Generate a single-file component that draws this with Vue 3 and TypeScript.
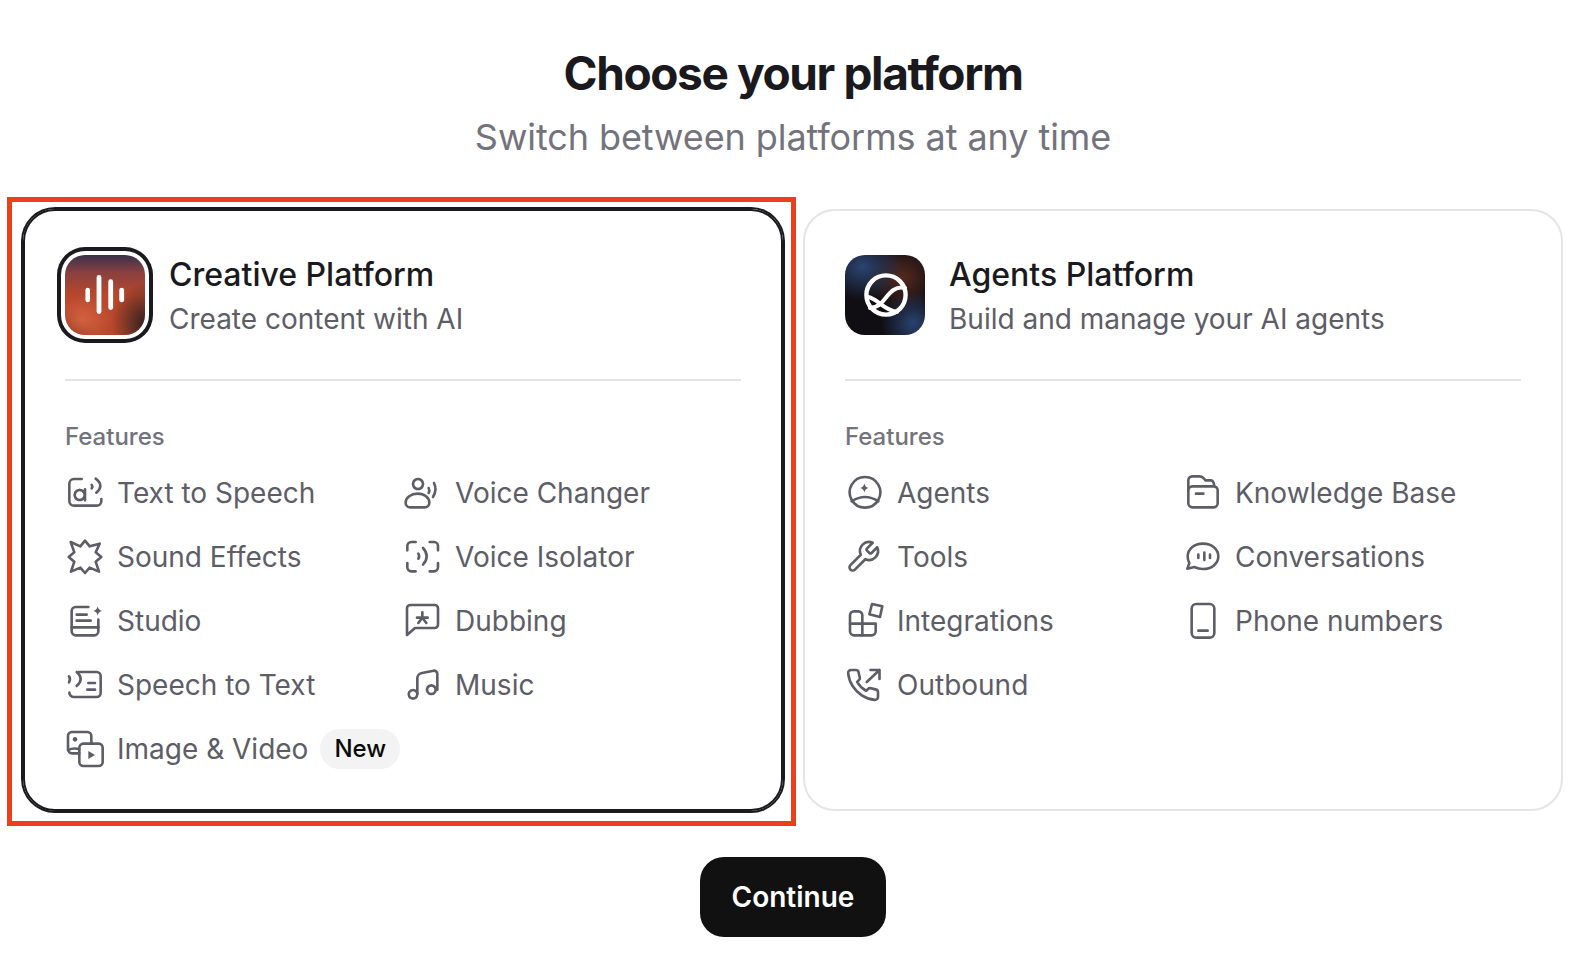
<script setup lang="ts">
type Icon = { vb?: string; sw?: number; s: string[]; f?: string[] }
type Feature = { label: string; icon: string; badge?: string }

const icons: Record<string, Icon> = {
  tts: {
    vb: '-3 0 108 108',
    s: [
      'M47 12H24a14 14 0 0 0-14 14V78a14 14 0 0 0 14 14H92a14 14 0 0 0 14-14V72',
      'M41 45a15 15 0 1 0 .01 0M57 43V76',
      'M89 11q14 10 14 21t-12 21M77 30q4 5 0 10',
    ],
  },
  sfx: {
    vb: '-3 0 108 108',
    s: ['M14 9L43 22L57 5L71 22L101 14L89 40L106 54L89 68L99 98L71 86L57 102L43 86L15 98L25 68L8 54L25 40Z'],
  },
  studio: {
    vb: '-3 0 108 108',
    s: ['M67 12H29a12 12 0 0 0-12 12V85a12 12 0 0 0 12 12H85a12 12 0 0 0 12-12V50', 'M17 73H97', 'M32 35H62M32 53H74'],
    f: ['M95 10q2 11 13 14q-11 2-13 14q-2-12-13-14q11-3 13-14z'],
  },
  stt: {
    vb: '-3 0 108 108',
    s: [
      'M38 15H92a12 12 0 0 1 12 12V78a12 12 0 0 1-12 12H24a14 14 0 0 1-14-13',
      'M67 48H87M64 68H87',
      'M32 15q12 10 12 21t-12 21M9 28q6 9 0 18',
    ],
  },
  image: {
    vb: '-3 0 108 108',
    s: [
      'M76 36V15a12 12 0 0 0-12-12H18a12 12 0 0 0-12 12V55a12 12 0 0 0 12 12H40',
      'M6 57q18-8 34-2',
      'M52 38H98a12 12 0 0 1 12 12V93a12 12 0 0 1-12 12H52a12 12 0 0 1-12-12V50a12 12 0 0 1 12-12z',
    ],
    f: ['M67 60L87 72L67 84Z', 'M27 18a7 7 0 1 0 .01 0z'],
  },
  changer: {
    s: [
      'M45 12a15 15 0 1 0 .01 0z',
      'M44 56c-20 0-36 12-36 27c0 8 6 14 14 14H64c9 0 15-6 15-14c0-15-15-27-35-27z',
      'M93 24q10 20-3 42M77 39q4 8 0 15',
    ],
  },
  isolator: {
    s: [
      'M38 9H25a12 12 0 0 0-12 12V34M80 9H93a12 12 0 0 1 12 12V34',
      'M13 72V85a12 12 0 0 0 12 12H38M105 72V85a12 12 0 0 1-12 12H80',
      'M60 27q11 11 11 25t-11 25M46 44q5 8 0 15',
    ],
  },
  dubbing: {
    s: [
      'M22 6H95a10 10 0 0 1 10 10V65a10 10 0 0 1-10 10H36L12 96V16a10 10 0 0 1 10-10z',
      'M58 28V40M42 44H74M58 44L46 60M58 44L70 60',
    ],
  },
  music: {
    s: [
      'M30 69a13 13 0 1 0 .01 0z',
      'M85 55a13 13 0 1 0 .01 0z',
      'M43 80V34a16 16 0 0 1 14-16L92 11a10 10 0 0 1 11 10V68',
    ],
  },
  agents: {
    s: ['M60 6a46 46 0 1 0 .01 0z', 'M20 79q40-26 80 0'],
    f: ['M58 25q2 12 13 14q-11 2-13 14q-2-12-13-14q11-2 13-14z'],
  },
  tools: {
    vb: '0 0 24 24',
    sw: 1.75,
    s: ['M14.7 6.3a1 1 0 0 0 0 1.4l1.6 1.6a1 1 0 0 0 1.4 0l3.77-3.77a6 6 0 0 1-7.94 7.94l-6.91 6.91a2.12 2.12 0 0 1-3-3l6.91-6.91a6 6 0 0 1 7.94-7.94l-3.76 3.76z'],
  },
  integrations: {
    s: [
      'M52 62V37a12 12 0 0 0-12-12H27a12 12 0 0 0-12 12V85a12 12 0 0 0 12 12H80a12 12 0 0 0 12-12V62z',
      'M15 62H52M52 62V97',
      'M81 3L112 10L105 42L73 34Z',
    ],
  },
  outbound: {
    vb: '0 0 24 24',
    sw: 1.75,
    s: [
      'M22 16.92v3a2 2 0 0 1-2.18 2 19.79 19.79 0 0 1-8.63-3.07 19.5 19.5 0 0 1-6-6 19.79 19.79 0 0 1-3.07-8.67A2 2 0 0 1 4.11 2h3a2 2 0 0 1 2 1.72 12.84 12.84 0 0 0 .7 2.81 2 2 0 0 1-.45 2.11L8.09 9.91a16 16 0 0 0 6 6l1.27-1.27a2 2 0 0 1 2.11-.45 12.84 12.84 0 0 0 2.81.7A2 2 0 0 1 22 16.92z',
      'M14.5 10L23 2M17 2h6v6',
    ],
  },
  knowledge: {
    s: [
      'M28 34H92a12 12 0 0 1 12 12V85a12 12 0 0 1-12 12H28a12 12 0 0 1-12-12V46a12 12 0 0 1 12-12z',
      'M16 44V16a12 12 0 0 1 12-12H50q8 0 14 8l3 4H84q8 0 10 18',
      'M39 56H61',
    ],
  },
  conversations: {
    s: [
      'M60 14c26 0 46 16 46 38s-20 38-46 38c-9 0-18-2-26-6l-21 5l6-17c-4-6-5-13-5-20c0-22 20-38 46-38z',
      'M46 47V57M64 41V63M81 47V57',
    ],
  },
  phone: {
    s: [
      'M40 3H80a14 14 0 0 1 14 14V90a14 14 0 0 1-14 14H40a14 14 0 0 1-14-14V17a14 14 0 0 1 14-14z',
      'M46 83H74',
    ],
  },
}

const creative: Feature[] = [
  { label: 'Text to Speech', icon: 'tts' },
  { label: 'Voice Changer', icon: 'changer' },
  { label: 'Sound Effects', icon: 'sfx' },
  { label: 'Voice Isolator', icon: 'isolator' },
  { label: 'Studio', icon: 'studio' },
  { label: 'Dubbing', icon: 'dubbing' },
  { label: 'Speech to Text', icon: 'stt' },
  { label: 'Music', icon: 'music' },
  { label: 'Image & Video', icon: 'image', badge: 'New' },
]

const agents: Feature[] = [
  { label: 'Agents', icon: 'agents' },
  { label: 'Knowledge Base', icon: 'knowledge' },
  { label: 'Tools', icon: 'tools' },
  { label: 'Conversations', icon: 'conversations' },
  { label: 'Integrations', icon: 'integrations' },
  { label: 'Phone numbers', icon: 'phone' },
  { label: 'Outbound', icon: 'outbound' },
]

const platforms = [
  { id: 'creative', title: 'Creative Platform', sub: 'Create content with AI', features: creative, selected: true },
  { id: 'agents', title: 'Agents Platform', sub: 'Build and manage your AI agents', features: agents, selected: false },
]
</script>

<template>
  <div class="page">
    <h1 class="heading">Choose your platform</h1>
    <p class="subheading">Switch between platforms at any time</p>

    <div class="cards">
      <section
        v-for="p in platforms"
        :key="p.id"
        class="card"
        :class="{ selected: p.selected }"
      >
        <div v-if="p.selected" class="highlight"></div>
        <header class="card-head">
          <div class="logo" :class="p.id">
            <svg v-if="p.id === 'creative'" viewBox="0 0 80 80" width="80" height="80" fill="#fff">
              <rect x="20.4" y="32.7" width="4.6" height="14.6" rx="2.3" />
              <rect x="31.6" y="20" width="4.8" height="39" rx="2.4" />
              <rect x="43.3" y="24.3" width="4.8" height="30.7" rx="2.4" />
              <rect x="54.3" y="32.7" width="4.8" height="14.6" rx="2.4" />
            </svg>
            <svg v-else viewBox="0 0 80 80" width="80" height="80" fill="none" stroke="#fff" stroke-linecap="round">
              <circle cx="41" cy="40" r="19.6" stroke-width="4.4" />
              <path d="M23 42C32 43 38 55 52 57" stroke-width="4" />
              <path d="M60 33C46 30 42 44 34 50C31 52 28 53 25 53" stroke-width="4" />
            </svg>
          </div>
          <div class="card-titles">
            <div class="card-title">{{ p.title }}</div>
            <div class="card-sub">{{ p.sub }}</div>
          </div>
        </header>

        <div class="divider"></div>

        <div class="features-label">Features</div>
        <ul class="features">
          <li v-for="f in p.features" :key="f.label" class="feature">
            <svg
              class="feature-icon"
              :viewBox="icons[f.icon].vb || '0 0 108 108'"
              width="36"
              height="36"
              fill="none"
              stroke="currentColor"
              stroke-linecap="round"
              stroke-linejoin="round"
              :stroke-width="icons[f.icon].sw || 7.8"
            >
              <path v-for="d in icons[f.icon].s" :key="d" :d="d" />
              <path v-for="d in icons[f.icon].f || []" :key="d" :d="d" fill="currentColor" stroke="none" />
            </svg>
            <span>{{ f.label }}</span>
            <span v-if="f.badge" class="badge">{{ f.badge }}</span>
          </li>
        </ul>
      </section>
    </div>

    <div class="actions">
      <button class="continue" type="button">Continue</button>
    </div>
  </div>
</template>

<style scoped>
.page{
  box-sizing: border-box;
  width: 1582px;
  height: 958px;
  overflow: hidden;
  padding: 45px 19px 0 23px;
  font-family: Inter, "Liberation Sans", sans-serif;
  background: #fff;
}

.heading{
  margin: 0;
  text-align: center;
  font-size: 46px;
  line-height: 56px;
  font-weight: 700;
  letter-spacing: -0.03em;
  color: #1a1a1e;
}

.subheading{
  margin: 14px 0 0;
  text-align: center;
  font-size: 36px;
  line-height: 44px;
  letter-spacing: -0.08px;
  color: #73737d;
}

.cards{
  display: grid;
  grid-template-columns: 760px 760px;
  gap: 20px;
  margin-top: 50px;
}

.card{
  position: relative;
  box-sizing: border-box;
  height: 602px;
  padding: 44px 40px 0;
  border: 2px solid #e5e5e5;
  border-radius: 32px;
}

.card.selected{
  border-color: #1a1a1e;
  box-shadow: 0 0 0 2px #1a1a1e;
}

.highlight{
  position: absolute;
  left: -18px;
  top: -14px;
  width: 779px;
  height: 619px;
  border: 5px solid #ee3f1d;
  pointer-events: none;
}

.card-head{
  display: flex;
  align-items: center;
  gap: 24px;
  height: 80px;
}

.logo{
  flex: none;
  width: 80px;
  height: 80px;
  border-radius: 20px;
}

.logo svg{
  display: block;
}

.logo.creative{
  background:
    radial-gradient(38% 30% at 22% 80%, rgba(214, 100, 66, 0.9) 0%, rgba(214, 100, 66, 0) 100%),
    radial-gradient(42% 50% at 100% 85%, #33211f 0%, rgba(51, 33, 31, 0) 100%),
    radial-gradient(35% 35% at 0% 100%, #7a3426 0%, rgba(122, 52, 38, 0) 100%),
    linear-gradient(180deg, #38324a 0%, rgba(120, 62, 70, 0.75) 22%, rgba(190, 70, 42, 0) 50%),
    #b9472c;
  box-shadow: 0 0 0 4px #fff, 0 0 0 8px #1a1a1e;
}

.logo.agents{
  background:
    radial-gradient(50% 42% at 22% 15%, #2b4472 0%, rgba(43, 68, 114, 0) 100%),
    radial-gradient(40% 40% at 85% 85%, #2a4270 0%, rgba(42, 66, 112, 0) 100%),
    radial-gradient(45% 42% at 72% 28%, #55291d 0%, rgba(85, 41, 29, 0) 100%),
    #100e12;
}

.card-titles{
  min-width: 0;
  padding-top: 2px;
}

.card-title{
  font-size: 32px;
  line-height: 40px;
  font-weight: 500;
  color: #1a1a1e;
}

.card-sub{
  margin-top: 6px;
  font-size: 28px;
  line-height: 36px;
  color: #5d5d68;
}

.divider{
  height: 2px;
  margin-top: 44px;
  background: #e4e4e7;
}

.features-label{
  margin-top: 40px;
  font-size: 24px;
  line-height: 32px;
  font-weight: 500;
  color: #73737d;
}

.features{
  display: grid;
  grid-template-columns: 338px 338px;
  row-gap: 24px;
  margin: 20px 0 0;
  padding: 0;
  list-style: none;
}

.feature{
  display: flex;
  align-items: center;
  gap: 16px;
  height: 40px;
  white-space: nowrap;
  font-size: 28px;
  color: #5d5d68;
}

.feature-icon{
  flex: none;
  overflow: visible;
}

.badge{
  margin-left: -4px;
  padding: 0 14px;
  font-size: 24px;
  line-height: 40px;
  font-weight: 500;
  color: #0a0a0a;
  background: #f3f3f3;
  border-radius: 20px;
}

.actions{
  display: flex;
  justify-content: center;
  margin-top: 46px;
}

.continue{
  width: 186px;
  height: 80px;
  border: 0;
  border-radius: 24px;
  background: #111;
  color: #fff;
  font-family: inherit;
  font-size: 28px;
  font-weight: 600;
  cursor: pointer;
}
</style>
